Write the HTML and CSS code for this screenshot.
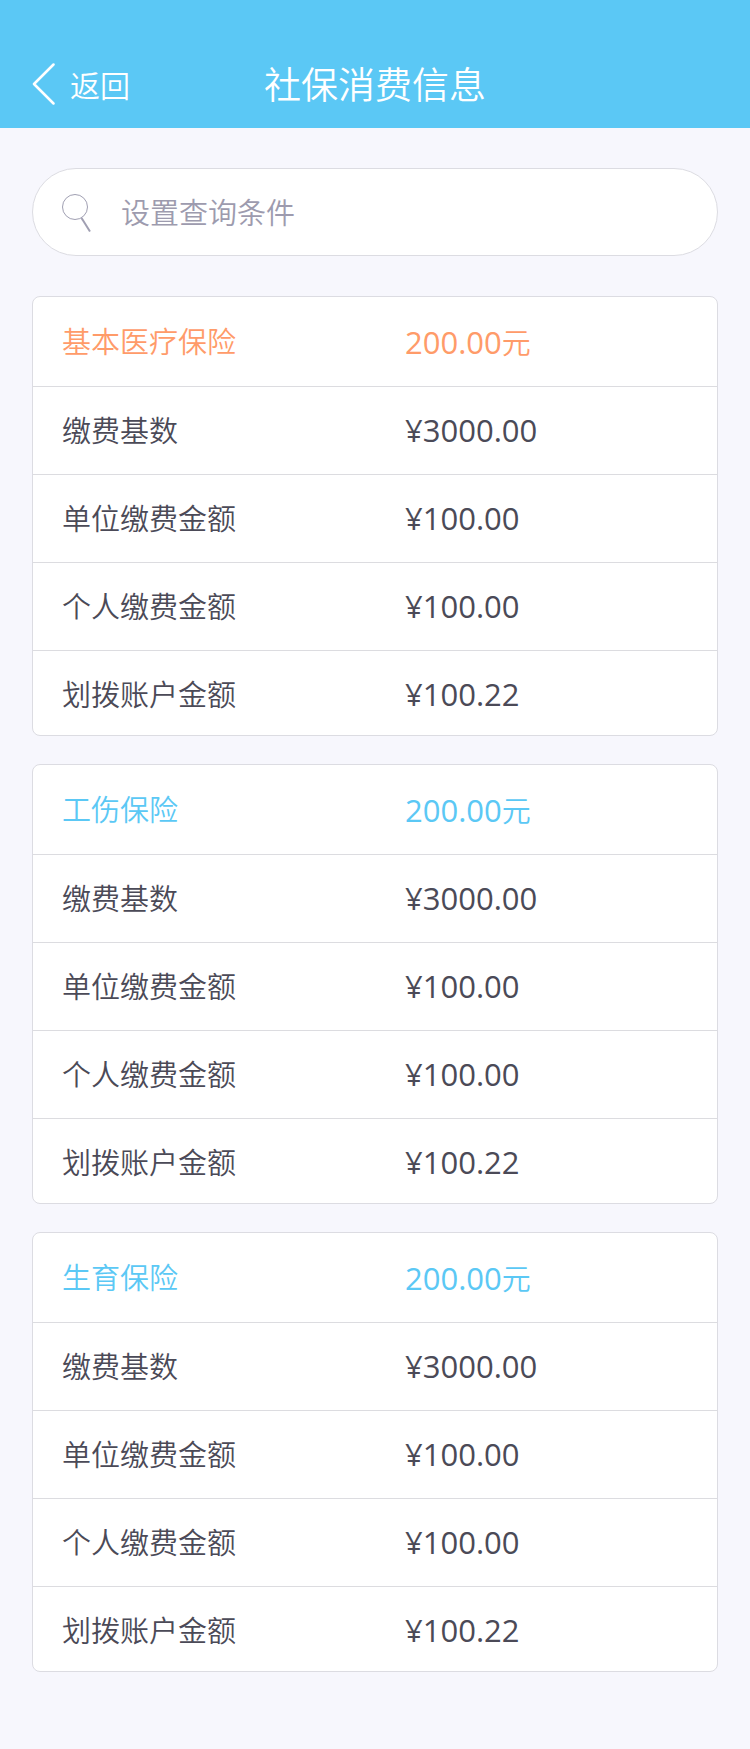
FILE: index.html
```html
<!DOCTYPE html>
<html lang="zh-CN">
<head>
<meta charset="utf-8">
<meta name="viewport" content="width=device-width, initial-scale=1">
<title>社保消费信息</title>
<link rel="stylesheet" href="styles.css">
</head>
<body>
<header class="topbar">
  <a class="back" href="#">
    <svg class="back-icon" viewBox="0 0 23 42" aria-hidden="true"><path d="M21.500 1.500L2 21L21.500 40.500"/></svg>
    <span>返回</span>
  </a>
  <h1 class="title">社保消费信息</h1>
</header>
<main class="content">
  <form class="search" role="search">
    <svg class="search-icon" viewBox="0 0 30 40" aria-hidden="true"><circle cx="14" cy="15" r="12.500"/><path class="handle" d="M20.500 26L29 39.500"/></svg>
    <input class="search-input" type="text" aria-label="设置查询条件" placeholder="设置查询条件">
  </form>
  <table class="card card-accent">
    <thead><tr><th scope="col">基本医疗保险</th><td>200.00<span class="unit">元</span></td></tr></thead>
    <tbody>
      <tr><th scope="row">缴费基数</th><td>¥3000.00</td></tr>
      <tr><th scope="row">单位缴费金额</th><td>¥100.00</td></tr>
      <tr><th scope="row">个人缴费金额</th><td>¥100.00</td></tr>
      <tr><th scope="row">划拨账户金额</th><td>¥100.22</td></tr>
    </tbody>
  </table>
  <table class="card">
    <thead><tr><th scope="col">工伤保险</th><td>200.00<span class="unit">元</span></td></tr></thead>
    <tbody>
      <tr><th scope="row">缴费基数</th><td>¥3000.00</td></tr>
      <tr><th scope="row">单位缴费金额</th><td>¥100.00</td></tr>
      <tr><th scope="row">个人缴费金额</th><td>¥100.00</td></tr>
      <tr><th scope="row">划拨账户金额</th><td>¥100.22</td></tr>
    </tbody>
  </table>
  <table class="card">
    <thead><tr><th scope="col">生育保险</th><td>200.00<span class="unit">元</span></td></tr></thead>
    <tbody>
      <tr><th scope="row">缴费基数</th><td>¥3000.00</td></tr>
      <tr><th scope="row">单位缴费金额</th><td>¥100.00</td></tr>
      <tr><th scope="row">个人缴费金额</th><td>¥100.00</td></tr>
      <tr><th scope="row">划拨账户金额</th><td>¥100.22</td></tr>
    </tbody>
  </table>
</main>
</body>
</html>
```
FILE: styles.css
```css
* {
  box-sizing: border-box;
}

body {
  margin: 0;
  background: #f7f7fd;
  color: #4b4a57;
  font-family: "Noto Sans CJK SC", sans-serif;
  font-size: 29px;
  font-weight: 350;
}

.topbar {
  display: grid;
  grid-template-columns: 1fr auto 1fr;
  align-items: center;
  height: 128px;
  padding: 39px 32px 0;
  background: #5bc8f5;
  color: #fff;
}

.back {
  display: flex;
  align-items: center;
  gap: 15px;
  color: inherit;
  text-decoration: none;
  font-size: 30px;
  line-height: 40px;
}

.back-icon {
  width: 23px;
  height: 42px;
  fill: none;
  stroke: #fff;
  stroke-width: 2.5;
  stroke-linecap: round;
  stroke-linejoin: round;
}

.title {
  margin: 0;
  padding-bottom: 2px;
  font-size: 37px;
  font-weight: 350;
  line-height: 48px;
}

.content {
  display: flex;
  flex-direction: column;
  gap: 28px;
  padding: 40px 32px;
}

.search {
  display: flex;
  align-items: center;
  gap: 30px;
  height: 88px;
  margin-bottom: 12px;
  padding: 0 28px;
  border: 1px solid #dcdce2;
  border-radius: 44px;
  background: #fff;
}

.search-icon {
  flex: none;
  width: 30px;
  height: 40px;
  fill: none;
  stroke: #a09fb2;
  stroke-width: 1;
}

.handle {
  stroke-width: 2;
}

.search-input {
  flex: 1;
  min-width: 0;
  padding: 0 0 2px;
  border: 0;
  outline: 0;
  background: transparent;
  color: #4b4a57;
  font: inherit;
  line-height: 44px;
}

.search-input::placeholder {
  color: #9d9bae;
  opacity: 1;
}

.card {
  width: 100%;
  table-layout: fixed;
  border: 1px solid #dcdce2;
  border-radius: 8px;
  border-spacing: 0;
  background: #fff;
}

.card th,
.card td {
  padding: 21px 0 22px 29px;
  border-bottom: 1px solid #dcdce0;
  font-weight: 350;
  line-height: 44px;
  text-align: left;
  vertical-align: top;
}

.card tbody th {
  padding-top: 20px;
}

.card td {
  padding-left: 30px;
  font-family: "Open Sans", "Noto Sans", sans-serif;
  font-size: 31px;
  font-weight: 400;
}

.card thead th,
.card thead td {
  padding-bottom: 24px;
  color: #5bc8f5;
}

.card thead td {
  padding-top: 23px;
  padding-bottom: 22px;
}

.card tbody tr:last-child > * {
  padding-bottom: 19px;
  border-bottom: 0;
}

.card-accent thead th,
.card-accent thead td {
  color: #ff9b69;
}

.unit {
  font-family: "Noto Sans CJK SC", sans-serif;
  font-size: 29px;
  font-weight: 350;
  line-height: 1;
}
```
